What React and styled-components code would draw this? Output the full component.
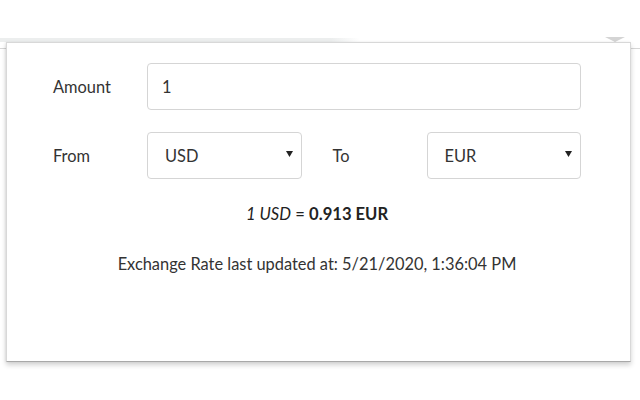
import React from "react";
import styled, { createGlobalStyle } from "styled-components";

const GlobalStyle = createGlobalStyle`
  html, body {
    margin: 0;
    padding: 0;
    background: #ffffff;
  }
  body {
    font-family: Lato, "Open Sans", "Liberation Sans", sans-serif;
    color: #333333;
  }
`;

const Page = styled.div`
  position: relative;
  width: 640px;
  height: 400px;
  overflow: hidden;
  background: #ffffff;
`;

const ChromeBar = styled.div`
  padding-top: 38px;
`;

const TabStrip = styled.div`
  width: 360px;
  height: 4px;
  background: linear-gradient(to right, #eceeee 0%, #eceeee 92%, #ffffff 100%);
`;

const ToolbarLine = styled.div`
  margin-top: 6px;
  height: 1px;
  background: #d6d6d6;
`;

// little arrow of the extension popup sticking out behind the panel
const PopupArrow = styled.div`
  position: absolute;
  left: 605px;
  top: 37px;
  width: 0;
  height: 0;
  border-left: 10px solid transparent;
  border-right: 10px solid transparent;
  border-top: 5px solid #d4d4d4;
`;

const Popup = styled.div`
  position: absolute;
  left: 6px;
  top: 42px;
  width: 625px;
  height: 320px;
  background: #ffffff;
  border: 1px solid #d8d8d8;
  border-bottom-color: #a8a8a8;
  box-shadow: 0 3px 5px rgba(0, 0, 0, 0.18), -1px 0 2px rgba(0, 0, 0, 0.06);
  padding: 20px 49px 0 46px;
  box-sizing: border-box;
  display: flex;
  flex-direction: column;
`;

const FormRow = styled.div`
  display: flex;
  align-items: center;
  height: 47px;
  margin-bottom: ${(p) => p.gap || 0}px;
`;

const Label = styled.label`
  width: ${(p) => p.width}px;
  padding-left: ${(p) => p.indent || 0}px;
  box-sizing: border-box;
  flex-shrink: 0;
  font-size: 16.4px;
  color: #333333;
`;

const TextInput = styled.input`
  flex: 1;
  min-width: 0;
  height: 47px;
  box-sizing: border-box;
  border: 1px solid #d5d5d5;
  border-radius: 4px;
  padding: 0 14px;
  font-family: inherit;
  font-size: 16.4px;
  color: #333333;
  outline: none;
`;

const SelectBox = styled.div`
  width: 155px;
  height: 47px;
  box-sizing: border-box;
  border: 1px solid #d5d5d5;
  border-radius: 4px;
  padding: 0 8px 0 17px;
  display: flex;
  align-items: center;
  justify-content: space-between;
  font-size: 16.4px;
  color: #333333;
`;

const Caret = styled.svg`
  width: 7px;
  height: 6px;
  margin-top: -3px;
`;

const Result = styled.div`
  margin-top: 25px;
  text-align: center;
  font-size: 16.6px;
  color: #222222;

  em {
    font-style: italic;
  }
  strong {
    font-weight: 700;
  }
`;

const Updated = styled.div`
  margin-top: 30px;
  text-align: center;
  font-size: 16.4px;
  color: #333333;
`;

const CurrencySelect = ({ value }) => (
  <SelectBox>
    <span>{value}</span>
    <Caret viewBox="0 0 7 6">
      <path d="M0 0 L7 0 L3.5 6 Z" fill="#222" />
    </Caret>
  </SelectBox>
);

export default function App() {
  return (
    <Page>
      <GlobalStyle />
      <ChromeBar>
        <TabStrip />
        <ToolbarLine />
      </ChromeBar>
      <PopupArrow />
      <Popup>
        <FormRow gap={22}>
          <Label width={94}>Amount</Label>
          <TextInput defaultValue="1" readOnly />
        </FormRow>
        <FormRow>
          <Label width={94}>From</Label>
          <CurrencySelect value="USD" />
          <Label width={125} indent={31}>
            To
          </Label>
          <CurrencySelect value="EUR" />
        </FormRow>
        <Result>
          <em>1 USD</em> = <strong>0.913 EUR</strong>
        </Result>
        <Updated>Exchange Rate last updated at: 5/21/2020, 1:36:04 PM</Updated>
      </Popup>
    </Page>
  );
}
